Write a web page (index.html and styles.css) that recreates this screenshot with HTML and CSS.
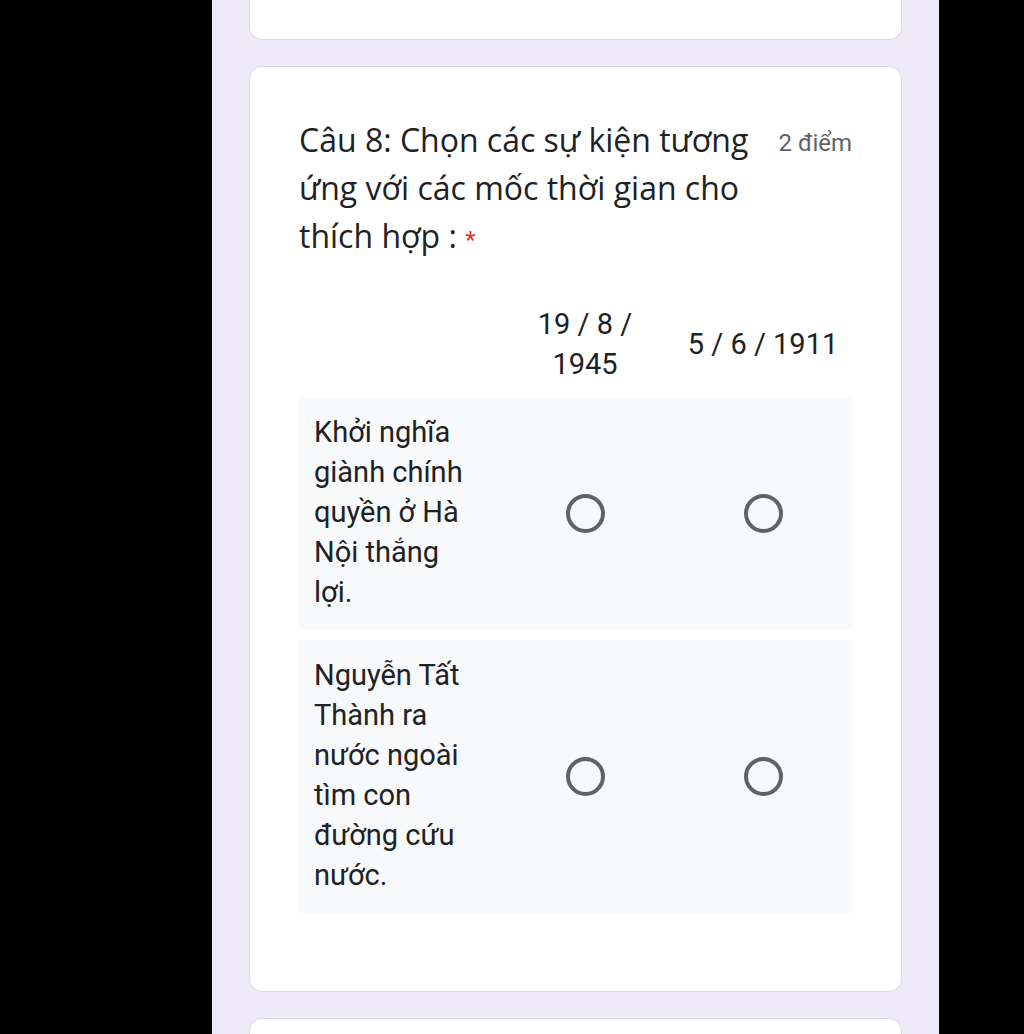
FILE: index.html
```html
<!DOCTYPE html>
<html lang="vi">
<head>
    <meta charset="UTF-8">
    <meta name="viewport" content="width=device-width, initial-scale=1.0">
    <title>Câu 8</title>
    <link rel="stylesheet" href="styles.css">
</head>
<body>
    <div class="page">
        <div class="card card-cut"></div>

        <div class="card question">
            <div class="q-head">
                <div class="q-title">Câu 8: Chọn các sự kiện tương ứng với các mốc thời gian cho thích hợp : <span class="req">*</span></div>
                <div class="q-points">2 điểm</div>
            </div>

            <div class="grid">
                <div class="grid-row grid-head">
                    <div class="label"></div>
                    <div class="col-title">19 / 8 / 1945</div>
                    <div class="col-title">5 / 6 / 1911</div>
                </div>
                <div class="grid-row item">
                    <div class="label">Khởi nghĩa giành chính quyền ở Hà Nội thắng lợi.</div>
                    <div class="cell"><span class="radio"></span></div>
                    <div class="cell"><span class="radio"></span></div>
                </div>
                <div class="grid-row item">
                    <div class="label">Nguyễn Tất Thành ra nước ngoài tìm con đường cứu nước.</div>
                    <div class="cell"><span class="radio"></span></div>
                    <div class="cell"><span class="radio"></span></div>
                </div>
            </div>
        </div>

        <div class="card card-next"></div>
    </div>
</body>
</html>
```
FILE: styles.css
```css
body {
    margin: 0;
    background-color: #000;
    font-family: Roboto, "Liberation Sans", sans-serif;
    color: #202124;
}
.page {
    margin-left: 212px;
    width: 727px;
    height: 100vh;
    overflow: hidden;
    background-color: #ede9f7;
    box-sizing: border-box;
    padding: 0 37px;
}
.card {
    background-color: #fff;
    border: 1px solid #dadce0;
    border-radius: 13px;
}
.card-cut {
    height: 40px;
    box-sizing: border-box;
    border-top: none;
    border-radius: 0 0 13px 13px;
}
.card-next {
    margin-top: 26px;
    height: 60px;
}
.question {
    margin-top: 26px;
    padding: 49px 49px 78px;
}
.q-head {
    display: flex;
    justify-content: space-between;
    gap: 20px;
}
.q-title {
    font-family: "Open Sans", sans-serif;
    font-size: 32px;
    line-height: 48px;
    width: 460px;
}
.req {
    font-family: Roboto, sans-serif;
    font-size: 24px;
    line-height: 1;
    color: #d93025;
}
.q-points {
    padding-top: 3px;
    font-size: 24px;
    line-height: 48px;
    color: #5f6368;
    white-space: nowrap;
}
.grid {
    margin-top: 44px;
    display: flex;
    flex-direction: column;
    gap: 10px;
}
.grid-row {
    display: grid;
    grid-template-columns: 197px 178px 178px;
    align-items: center;
    font-size: 29px;
    line-height: 40px;
}
.grid-head {
    margin-bottom: 3px;
}
.col-title {
    text-align: center;
    padding: 0 11px;
}
.item {
    background-color: #f8f9fa;
    border-radius: 4px;
}
.item .label {
    padding: 15px 24px 18px 15px;
}
.cell {
    display: flex;
    justify-content: center;
}
.radio {
    width: 39px;
    height: 39px;
    box-sizing: border-box;
    border: 4px solid #5f6368;
    border-radius: 50%;
}
```
